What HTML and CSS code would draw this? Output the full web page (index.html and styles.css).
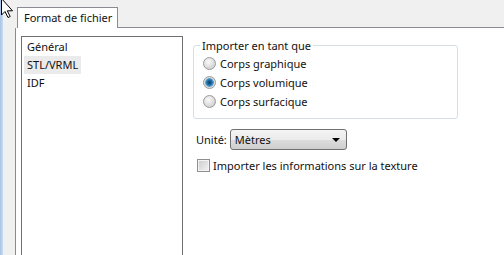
FILE: index.html
```html
<!DOCTYPE html>
<html lang="fr">
<head>
    <meta charset="UTF-8">
    <title>Format de fichier</title>
    <link rel="stylesheet" href="styles.css">
</head>
<body>
    <div class="window">
        <div class="edge"></div>
        <div class="side"></div>
        <div class="tabs">
            <!-- Tab header -->
            <div class="tabstrip">
                <div class="tab">Format de fichier</div>
                <div class="tabfill"></div>
            </div>

            <div class="panel">
                <ul class="list">
                    <li>Général</li>
                    <li class="hover">STL/VRML</li>
                    <li>IDF</li>
                </ul>

                <div class="options">
                    <fieldset class="group">
                        <legend>Importer en tant que</legend>
                        <div class="radio"><span class="dot"></span>Corps graphique</div>
                        <div class="radio"><span class="dot checked"></span>Corps volumique</div>
                        <div class="radio"><span class="dot"></span>Corps surfacique</div>
                    </fieldset>

                    <div class="unit-row">
                        <span class="unit-label">Unité:</span>
                        <div class="select">
                            <span>Mètres</span>
                            <span class="arrow"></span>
                        </div>
                    </div>

                    <div class="check">
                        <span class="box"></span>Importer les informations sur la texture
                    </div>
                </div>
            </div>
        </div>
    </div>

    <!-- mouse pointer over the corner -->
    <svg class="cursor" width="16" height="22" viewBox="0 0 16 22">
        <path d="M1.5 -1.5 L1.5 15 L5 11.5 L8 17.5 L10.2 16.5 L7.3 10.8 L12.5 10.8 Z" fill="#fff" stroke="#000" stroke-width="1" stroke-linejoin="round"/>
    </svg>
</body>
</html>
```

FILE: styles.css
```css
* {
    box-sizing: border-box;
    margin: 0;
    padding: 0;
}

body {
    font-family: 'Noto Sans', 'Open Sans', sans-serif;
    font-size: 11px;
    color: #111;
    background: #f0f0f0;
    width: 504px;
    height: 255px;
    overflow: hidden;
}

.window {
    display: flex;
    height: 255px;
}

.edge {
    width: 3px;
    background: linear-gradient(to right, #a7c3e6, #c9dcf2);
}

.side {
    width: 12px;
    background: #f0f0f0;
}

.tabs {
    flex: 1;
    display: flex;
    flex-direction: column;
}

/* Tab header */
.tabstrip {
    height: 28px;
    display: flex;
    align-items: flex-end;
}

.tab {
    margin-left: 2px;
    width: 101px;
    height: 21px;
    padding: 2px 0 0 6px;
    background: #fff;
    border: 1px solid #898c95;
    border-bottom: none;
    white-space: nowrap;
}

.tabfill {
    flex: 1;
    border-bottom: 1px solid #898c95;
}

.panel {
    flex: 1;
    display: flex;
    align-items: flex-start;
    background: #fff;
    border-left: 1px solid #898c95;
    padding: 8px 0 0 5px;
    overflow: hidden;
}

/* Left list */
.list {
    list-style: none;
    width: 162px;
    height: 240px;
    border: 1px solid #6f6f6f;
    padding: 1px 2px;
}

.list li {
    width: fit-content;
    height: 18px;
    line-height: 18px;
    padding: 0 3px;
}

.list li.hover {
    background: #ebebeb;
}

/* Right side */
.options {
    margin-left: 10px;
    width: 265px;
}

.group {
    border: 1px solid #d5dfe5;
    border-radius: 3px;
    padding: 1px 6px 7px;
    margin-top: 2px;
}

.group legend {
    padding: 0 2px;
    line-height: 15px;
}

.radio {
    display: flex;
    align-items: center;
    height: 19px;
    padding-left: 3px;
}

.dot {
    width: 13px;
    height: 13px;
    border-radius: 50%;
    border: 1px solid #9a9a9a;
    background: radial-gradient(circle at 40% 35%, #fafafa, #d4d4d4 70%, #c4c4c4);
    margin-right: 4px;
    flex: none;
}

.dot.checked {
    background: radial-gradient(circle at 50% 50%, #0b3d66 0, #1d6fa8 2.5px, #5aa0d0 4px, #d6d6d6 4.6px, #eaeaea 6px);
}

.unit-row {
    display: flex;
    align-items: center;
    margin-top: 10px;
    padding-left: 3px;
}

.unit-label {
    margin-right: 3px;
}

.select {
    display: flex;
    align-items: center;
    justify-content: space-between;
    width: 117px;
    height: 21px;
    padding: 0 3px 0 4px;
    border: 1px solid #707070;
    border-radius: 3px;
    background: linear-gradient(#f4f4f4, #ebebeb 50%, #dddddd 50%, #cfcfcf);
}

.arrow {
    width: 0;
    height: 0;
    border-left: 4px solid transparent;
    border-right: 4px solid transparent;
    border-top: 4px solid #000;
    margin-right: 3px;
}

.check {
    display: flex;
    align-items: center;
    margin-top: 8px;
    padding-left: 4px;
}

.box {
    width: 13px;
    height: 13px;
    border: 1px solid #8e8f8f;
    background: linear-gradient(135deg, #cbcbcb, #f4f4f4);
    box-shadow: inset 0 0 0 1px #f4f4f4;
    margin-right: 3px;
}

.cursor {
    position: absolute;
    left: 0;
    top: 0;
}
```
